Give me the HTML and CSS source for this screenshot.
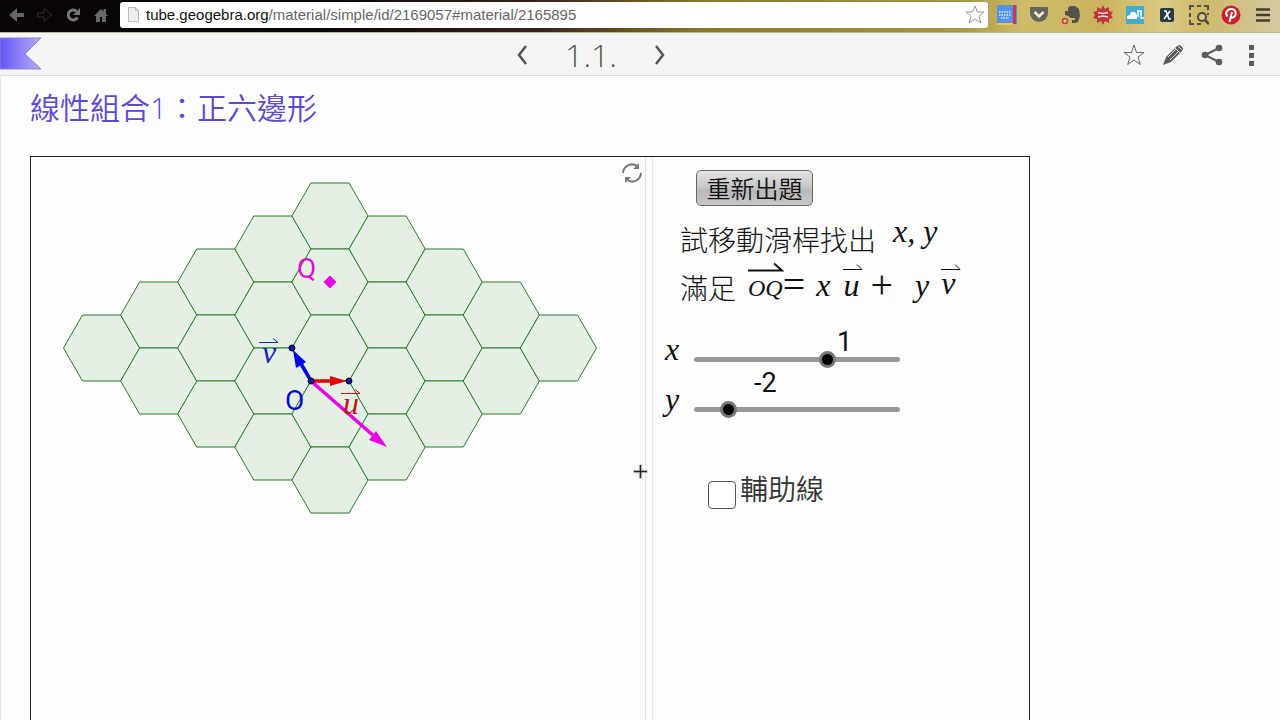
FILE: index.html
```html
<!DOCTYPE html>
<html lang="zh-Hant">
<head>
<meta charset="utf-8">
<title>線性組合1：正六邊形</title>
<link rel="stylesheet" href="styles.css">
</head>
<body>
<header class="browser">
  <nav class="nav-buttons">
    <button class="icon-btn" aria-label="Back"><svg width="18" height="16"><path d="M1 8l8-7v5h7v4H9v5z" fill="#666"/></svg></button>
    <button class="icon-btn" aria-label="Forward"><svg width="18" height="16"><path d="M16 8L8 1.500v4.500H1.500v4H8v4.500z" fill="none" stroke="#2f2f2f"/></svg></button>
    <button class="icon-btn" aria-label="Reload"><svg width="18" height="16"><path d="M12.500 4.200A5 5 0 1 0 13.500 10.500" fill="none" stroke="#777" stroke-width="3"/><path d="M16 1v7H9z" fill="#777"/></svg></button>
    <button class="icon-btn" aria-label="Home"><svg width="18" height="16"><path d="M2 9l7-7 2.500 2.500V2H14v5l2 2h-2v6h-4v-5H8v5H4V9z" fill="#696969"/></svg></button>
  </nav>
  <label class="omnibox">
    <svg width="13" height="17"><path d="M1.500 1.500h7l3 3v11h-10z" fill="#eee" stroke="#bbb"/><path d="M8.500 1.500v3h3" fill="none" stroke="#bbb"/></svg>
    <span class="url"><b>tube.geogebra.org</b>/material/simple/id/2169057#material/2165895</span>
    <svg width="20" height="20" viewBox="0 0 20 20"><path d="M10 1l2.500 6h6.500l-5 4.200 2 6.800-6-4-6 4 2-6.800L1 7h6.500z" fill="#fff" stroke="#999"/></svg>
  </label>
  <div class="extensions">
    <svg width="20" height="20"><path fill="#5592e8" d="M0 0h20v19H0z"/><path fill="#c63a50" d="M16 0h3v19h-3z"/><path fill="#f0c94b" d="M0 18h16v2H0z"/><path d="M2 7h12M2 10h12M4 13h8" stroke="#dceaff" stroke-width="1.500" stroke-dasharray="1.500 1"/></svg>
    <svg width="20" height="20"><path d="M1 2h18v6a9 9 0 0 1-18 0z" fill="#66645f"/><path d="M5.500 7l4.500 4.500L14.500 7" fill="none" stroke="#f5eccb" stroke-width="2.500"/></svg>
    <svg width="20" height="20"><path d="M5 5l4-4h5l4 3 1 7-2 6-3 1h-3v-3h3v-2h-4l-3-2-3-1V6h3V3z" fill="#55524b"/><circle cx="4" cy="16" r="2.500" fill="#e2c4a0" stroke="#c63f35" stroke-width="1.500"/></svg>
    <svg width="20" height="20"><path d="M10 0l2 4 4-2v4l4 1-2 3 2 3-4 1v4l-4-2-2 4-2-4-4 2v-4l-4-1 2-3-2-3 4-1V2l4 2z" fill="#bd343b"/><path d="M5 7.500l5 1 5-1M5 12l5-1 5 1" fill="none" stroke="#f7dada" stroke-width="1.500"/></svg>
    <svg width="20" height="20"><path fill="#45acd1" d="M1 1h18v18H1z"/><path d="M2 14v-3l3-1 1-3h4l2 3v4z" fill="#fff"/><path d="M13 12V6h3v7h3" fill="none" stroke="#fff" stroke-width="1.500"/></svg>
    <svg width="20" height="20"><rect x="3" y="3" width="14" height="14" rx="2" fill="#2b3a46"/><path d="M7 6h2l3 8h2M13 6l-6 8" fill="none" stroke="#fff" stroke-width="1.500"/></svg>
    <svg width="20" height="20"><path d="M1 5V1h4M8 1h4M15 1h4v4M1 8v4M1 15v4h4M19 8v2M8 19h4" fill="none" stroke="#575044" stroke-width="2"/><circle cx="13" cy="12" r="4" fill="#d9ca89" stroke="#4b4842" stroke-width="2"/><path d="M16 15l4 4" stroke="#4b4842" stroke-width="2.500"/></svg>
    <svg width="20" height="20"><circle cx="10" cy="10" r="9.500" fill="#c9202f"/><path d="M8.500 17l2.500-10M6.500 11.500C3 7 7 4 10.500 4c6 0 5 9 .5 8.500l-1.500-1" fill="none" stroke="#fff" stroke-width="2"/></svg>
    <svg width="20" height="20"><path d="M3 4.500h14M3 10h14M3 15.500h14" stroke="#463d31" stroke-width="2.500"/></svg>
  </div>
</header>

<div class="bookbar">
  <svg class="ribbon" width="42" height="34"><defs><linearGradient id="rib"><stop stop-color="#6556f4"/><stop offset="1" stop-color="#b5adfa"/></linearGradient></defs><path d="M0 1h41L25 17l16 15H0z" fill="url(#rib)" stroke="#8d83cf"/></svg>
  <div class="pager">
    <button class="icon-btn" aria-label="Previous"><svg width="14" height="22"><path d="M11 2L4 11l7 9" fill="none" stroke="#555" stroke-width="2.500"/></svg></button>
    <span class="page">1.1.</span>
    <button class="icon-btn" aria-label="Next"><svg width="14" height="22"><path d="M3 2l7 9-7 9" fill="none" stroke="#555" stroke-width="2.500"/></svg></button>
  </div>
  <div class="actions">
    <button class="icon-btn" aria-label="Favourite"><svg width="24" height="24"><path d="M12 2l2.500 7.500H22l-6 4.500 2.300 7.500L12 17l-6.300 4.500L8 14 2 9.500h7.500z" fill="none" stroke="#666"/></svg></button>
    <button class="icon-btn" aria-label="Edit"><svg width="24" height="24"><path d="M2 22l3-8L16 3q2-2 4 0l1 1q2 2 0 4L10 19z" fill="#5b5b5b"/><path d="M14 5l5 5M16.500 2.500l5 5M7 14l8-8M9 17l8-8" stroke="#ddd"/></svg></button>
    <button class="icon-btn" aria-label="Share"><svg width="24" height="24"><path d="M19 5L5 12l14 7" fill="none" stroke="#5b5b5b" stroke-width="2"/><g fill="#5b5b5b"><circle cx="19" cy="5" r="3.300"/><circle cx="5" cy="12" r="3.300"/><circle cx="19" cy="19" r="3.300"/></g></svg></button>
    <button class="icon-btn" aria-label="More"><svg width="24" height="24"><path d="M10 2h5v5h-5zM10 10h5v5h-5zM10 18h5v5h-5z" fill="#5b5b5b"/></svg></button>
  </div>
</div>

<main class="content">
  <h1 class="title">線性組合1：正六邊形</h1>
  <section class="applet">
    <div class="graph">
      <svg class="plane" width="614" height="563" viewBox="31 157 614 563">
        <defs><path id="hex" d="M-38.100 0l19-33h38.200l19 33-19 33h-38.200z"/></defs>
        <g id="cells" class="cells"></g>
        <g stroke-width="3.500">
          <path d="M311 381l64 56" stroke="#e800e8"/><path d="M387 447l-18-7 7-9z" fill="#e800e8"/>
          <path d="M311 381h24" stroke="#e60000"/><path d="M347 381l-17-5v10z" fill="#e60000"/>
          <path d="M311 381l-11-19" stroke="#0000e6"/><path d="M293 350l3 18 10-6z" fill="#0000e6"/>
        </g>
        <g fill="#1414a8" stroke="#001"><circle cx="292" cy="348" r="3"/><circle cx="311" cy="381" r="3"/><circle cx="349" cy="381" r="3"/></g>
        <path d="M330 275.500l6.500 6.500-6.500 6.500-6.500-6.500z" fill="#e800e8"/>
        <text class="point" x="297" y="278" fill="#e010d8">Q</text>
        <text class="point" x="285" y="410" fill="#0909cf">O</text>
        <text class="vec-name" x="262" y="363" fill="#2020b8">v</text>
        <path class="harpoon" d="M259 342.500h19l-5-4" stroke="#2020b8"/>
        <text class="vec-name" x="343" y="414" fill="#c01515">u</text>
        <path class="harpoon" d="M341 393.500h19l-5-4" stroke="#c01515"/>
      </svg>
      <button class="icon-btn reset" aria-label="Reset"><svg width="22" height="22"><path d="M2 11A9 9 0 0 1 16 4M20 11A9 9 0 0 1 6 18" fill="none" stroke="#777" stroke-width="2"/><path d="M18 1v6h-6zM4 21v-6h6z" fill="#777"/></svg></button>
      <svg class="cursor" width="15" height="15"><path d="M7.500 0v15M0 7.500h15" stroke="#ddd" stroke-width="4"/><path d="M7.500 1v13M1 7.500h13" stroke="#222" stroke-width="1.500"/></svg>
    </div>
    <div class="splitter"></div>
    <div class="panel">
      <button class="regen">重新出題</button>
      <p class="line first">試移動滑桿找出 <i class="math raised">x, y</i></p>
      <p class="line second">滿足
        <i class="math vec small">OQ<svg width="36" height="10"><path d="M0 8.500h34l-8-7" stroke-width="2"/></svg></i><span class="math sign">=</span>
        <i class="math xvar">x</i>
        <i class="math vec uvar">u<svg width="20" height="8"><path d="M0 6.500h19l-5-5"/></svg></i>
        <span class="math sign plus">+</span>
        <i class="math yvar">y</i>
        <i class="math vec vvar">v<svg width="20" height="8"><path d="M0 6.500h19l-5-5"/></svg></i>
      </p>
      <div class="slider-row">
        <label class="math name" for="sx">x</label>
        <div class="track"><output class="value vx" for="sx">1</output><input type="range" id="sx" min="-307" max="307" value="100"></div>
      </div>
      <div class="slider-row">
        <label class="math name" for="sy">y</label>
        <div class="track"><output class="value vy" for="sy">-2</output><input type="range" id="sy" min="-307" max="307" value="-223"></div>
      </div>
      <div class="check"><input type="checkbox" id="aux"><label for="aux">輔助線</label></div>
    </div>
  </section>
</main>
<script src="cells.js"></script>
</body>
</html>
```
FILE: styles.css
```css
* { box-sizing: border-box; }
body { margin: 0; height: 100vh; overflow: hidden; display: flex; flex-direction: column; background: #fdfdfd; font-family: "Liberation Sans", "Noto Sans CJK TC", sans-serif; }
svg { display: block; flex: none; }
.icon-btn { border: 0; padding: 0; background: none; }

.browser { display: flex; align-items: center; height: 33px; flex: none; padding: 0 7px 3px 8px; border-bottom: 1px solid #bbb49a; background: linear-gradient(90deg, #080504 0, #080504 25%, #3a211b 42%, #8a7828 55%, #a99440 75%, #cfbc6a 80%, #c9b45c 86%, #dccb86 91%, #cdb968 94%, #d6c9a4 100%); }
.nav-buttons { display: flex; gap: 10px; width: 112px; }
.omnibox { display: flex; align-items: center; flex: 1; height: 26px; padding: 0 3px 0 7px; background: #fff; border-radius: 3px; }
.url { flex: 1; margin-left: 6px; font-size: 15px; color: #666; white-space: nowrap; }
.url b { font-weight: 400; color: #111; }
.extensions { display: flex; gap: 12px; margin-left: 9px; }

.bookbar { display: flex; align-items: center; flex: none; height: 43px; background: #f5f5f5; border-bottom: 1px solid #dcdcdc; }
.ribbon { width: 42px; }
.pager { flex: 1; display: flex; justify-content: center; align-items: center; gap: 36px; padding: 2px 0 0 18px; }
.page { font: 300 32px/40px "Open Sans", sans-serif; color: #555; }
.actions { display: flex; gap: 15px; padding: 1px 17px 0 0; }

.content { flex: 1; display: flex; flex-direction: column; padding-left: 29px; border-left: 1px solid #e4e4e4; min-height: 0; }
.title { margin: 12px 0 28px; font: 350 30px/40px "Open Sans", "Noto Sans CJK TC", sans-serif; color: #5b49cf; }
.applet { flex: 1; display: flex; width: 1000px; max-width: 100%; border: 1px solid #222; border-bottom: 0; min-height: 0; }
.graph { position: relative; width: 614px; overflow: visible; }
.cells use { fill: #e5f0e5; stroke: #2a7a2a; stroke-width: 1; }
.point { font: 28px Roboto, sans-serif; }
.vec-name { font: italic 32px "Liberation Serif", serif; }
.harpoon { fill: none; stroke-width: 1; }
.reset { position: absolute; right: 2px; top: 5px; }
.cursor { position: absolute; right: -3px; top: 307px; }
.splitter { width: 8px; border: solid #e6e6e6; border-width: 0 1px; background: #fafafa; }

.panel { flex: 1; min-width: 0; padding-top: 13px; color: #111; }
.regen { display: block; margin-left: 43px; height: 36px; width: 117px; padding: 0; border: 1px solid #666; border-radius: 5px; background: linear-gradient(#e4e4e4, #c6c6c6 50%, #b8b8b8 56%, #c8c8c8); font: 350 24px/30px "Noto Sans CJK TC", sans-serif; color: #111; }
.line { margin: 0 0 0 27px; font: 300 28px/48px "Noto Sans CJK TC", sans-serif; display: flex; white-space: nowrap; }
.first { margin-top: 9px; }
.math { font: 32px/44px "Liberation Serif", serif; }
i.math, label.math { font-style: italic; }
.raised { margin-left: 17px; line-height: 32px; }
.vec { position: relative; }
.vec svg { position: absolute; left: 0; top: 0; fill: none; stroke: #111; }
.small { font-size: 24px; margin-left: 12px; line-height: 50px; }
.small svg { top: -1px; }
.sign { font-size: 40px; }
.xvar { margin-left: 11px; }
.uvar { margin-left: 13px; }
.plus { margin-left: 11px; }
.yvar { margin-left: 22px; }
.vvar { margin-left: 12px; line-height: 40px; }
.slider-row { display: flex; height: 50px; padding-left: 12px; }
.line + .slider-row { margin-top: 19px; }
.name { width: 29px; line-height: 34px; }
.track { position: relative; width: 206px; padding-top: 12px; }
.value { position: absolute; font: 27px/30px Roboto, sans-serif; top: -5px; }
.vx { left: 143px; }
.vy { left: 60px; top: -14px; }
input[type=range] { display: block; appearance: none; width: 100%; height: 30px; margin: 0; background: none; }
input[type=range]::-webkit-slider-runnable-track { height: 5px; border-radius: 3px; background: #989898; }
input[type=range]::-webkit-slider-thumb { appearance: none; width: 17px; height: 17px; margin-top: -6px; border-radius: 50%; border: 3px solid #777; background: #000; }
.check { display: flex; gap: 4px; margin: 36px 0 0 55px; font: 350 28px/40px "Noto Sans CJK TC", sans-serif; color: #333; }
.check input { appearance: none; width: 28px; height: 28px; margin: 13px 0 0; border: 1px solid #555; border-radius: 4px; background: #fff; }
```
FILE: cells.js
```js
// Columns narrow by one cell for each step away from the middle.
const cells = document.getElementById("cells");
for (let col = -4; col <= 4; col++) {
  const count = 5 - Math.abs(col);
  for (let row = 0; row < count; row++) {
    const cell = document.createElementNS("http://www.w3.org/2000/svg", "use");
    cell.setAttribute("href", "#hex");
    cell.setAttribute("x", 330 + col * 57.1);
    cell.setAttribute("y", 348 + (row * 2 - count + 1) * 33);
    cells.appendChild(cell);
  }
}
```
